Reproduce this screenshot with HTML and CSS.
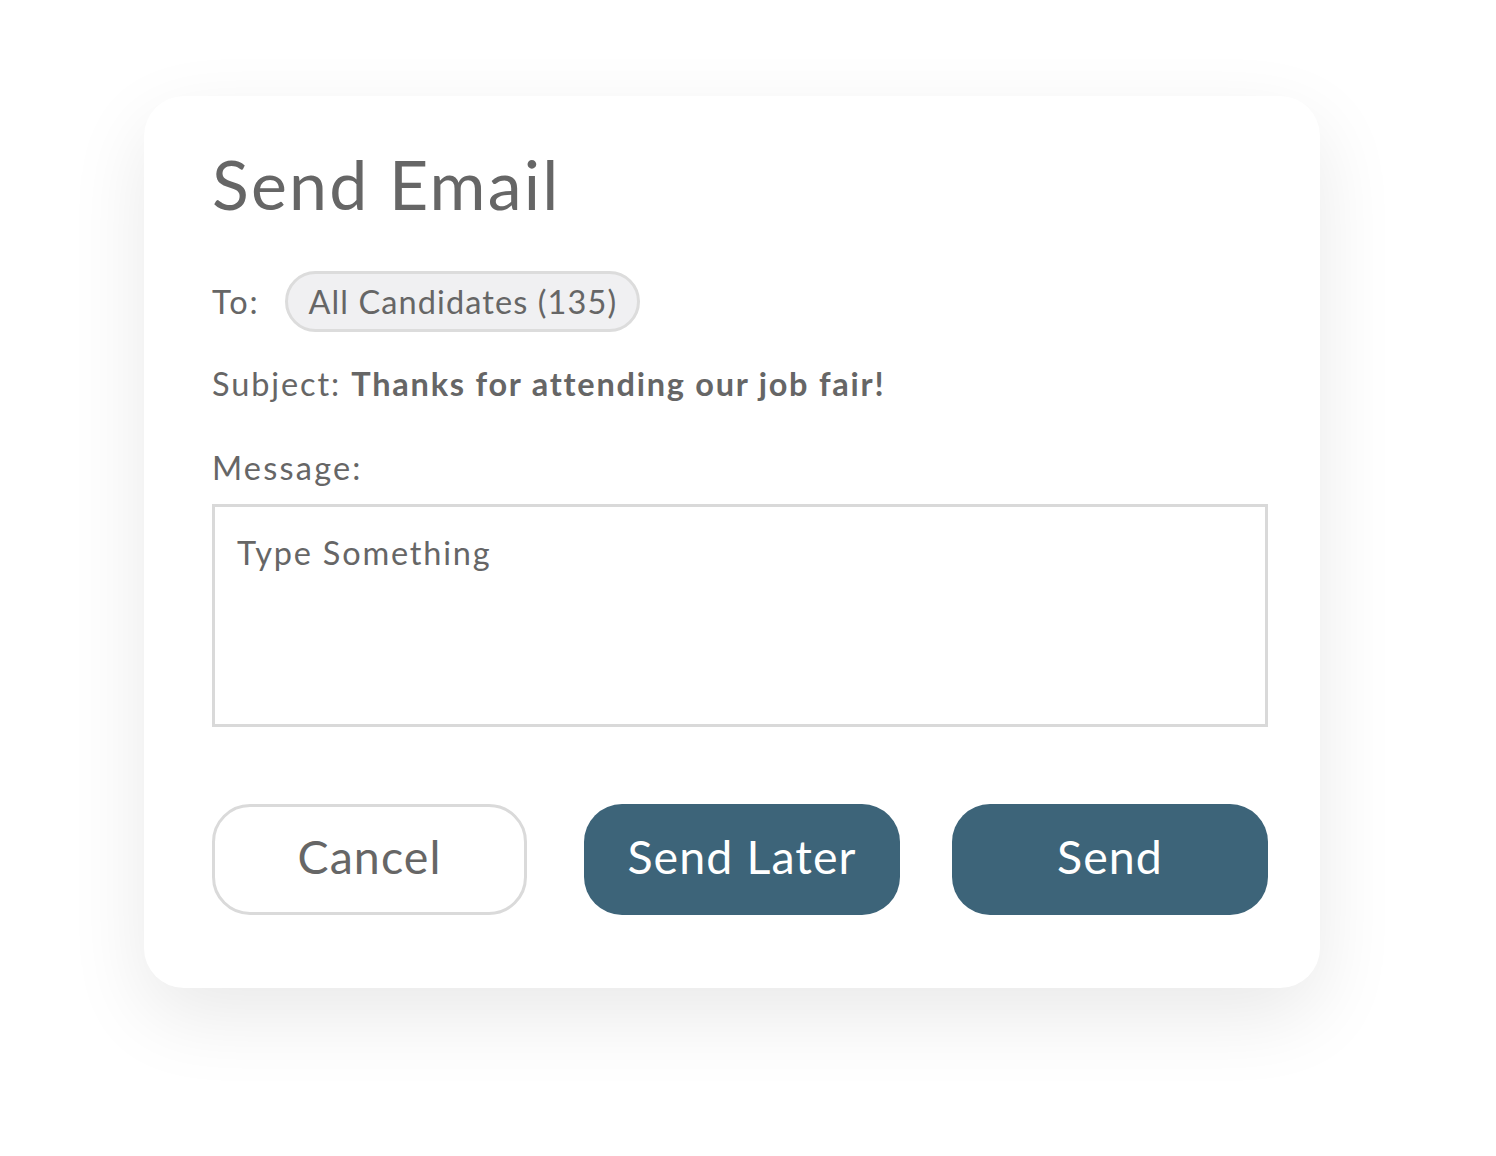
FILE: index.html
```html
<!DOCTYPE html>
<html lang="en">
<head>
<meta charset="utf-8">
<title>Send Email</title>
<link rel="stylesheet" href="styles.css">
</head>
<body>
<div class="modal">
  <h1 class="title">Send Email</h1>
  <div class="row to-row">
    <span class="label">To:</span>
    <span class="pill">All Candidates (135)</span>
  </div>
  <div class="row subject-row">
    <span class="label">Subject:</span> <strong class="subject">Thanks for attending our job fair!</strong>
  </div>
  <div class="row message-label">Message:</div>
  <div class="textarea"><span class="placeholder">Type Something</span></div>
  <div class="actions">
    <button class="btn btn-outline">Cancel</button>
    <button class="btn btn-primary btn-later">Send Later</button>
    <button class="btn btn-primary btn-send">Send</button>
  </div>
</div>
</body>
</html>
```
FILE: styles.css
```css
html, body {
  margin: 0;
  padding: 0;
  background: #ffffff;
}
body {
  font-family: "Lato", "Liberation Sans", sans-serif;
  color: #666666;
  width: 1496px;
  height: 1156px;
  overflow: hidden;
}
.modal {
  box-sizing: border-box;
  margin: 96px 0 0 144px;
  width: 1176px;
  height: 892px;
  background: #ffffff;
  border-radius: 40px;
  box-shadow: 0 28px 80px rgba(0, 0, 0, 0.09);
  padding: 54px 52px 0 68px;
  display: flex;
  flex-direction: column;
}
.title {
  margin: 0;
  font-size: 68px;
  font-weight: 400;
  line-height: 68px;
  letter-spacing: 2.2px;
  color: #666666;
}
.row {
  font-size: 32.5px;
  line-height: 40px;
  letter-spacing: 1.9px;
}
.to-row {
  margin-top: 53px;
  display: flex;
  align-items: center;
  gap: 26px;
}
.pill {
  box-sizing: border-box;
  height: 61px;
  padding: 0 20px 0 20px;
  display: inline-flex;
  align-items: center;
  background: #f0f0f2;
  border: 3px solid #dcdcdc;
  border-radius: 31px;
  font-size: 32.5px;
  letter-spacing: 1.1px;
}
.subject-row {
  margin-top: 32px;
}
.subject {
  font-weight: 700;
  letter-spacing: 1.75px;
}
.message-label {
  margin-top: 44px;
  letter-spacing: 2.2px;
}
.textarea {
  box-sizing: border-box;
  margin-top: 16px;
  width: 1056px;
  height: 223px;
  border: 3px solid #d9d9d9;
  padding: 26px 22px;
  font-size: 32.5px;
  line-height: 40px;
  letter-spacing: 1.8px;
}
.actions {
  margin-top: 77px;
  display: flex;
  width: 1056px;
}
.btn {
  box-sizing: border-box;
  width: 316px;
  height: 111px;
  border-radius: 38px;
  font-family: "Lato", "Liberation Sans", sans-serif;
  font-size: 46.5px;
  font-weight: 400;
  letter-spacing: 1.1px;
  padding: 0 0 8px 0;
  cursor: pointer;
}
.btn-outline {
  width: 315px;
  background: #ffffff;
  border: 3px solid #dadada;
  color: #666666;
}
.btn-primary {
  background: #3d6479;
  border: none;
  color: #ffffff;
}
.btn-later {
  margin-left: 57px;
}
.btn-send {
  margin-left: 52px;
}
```
